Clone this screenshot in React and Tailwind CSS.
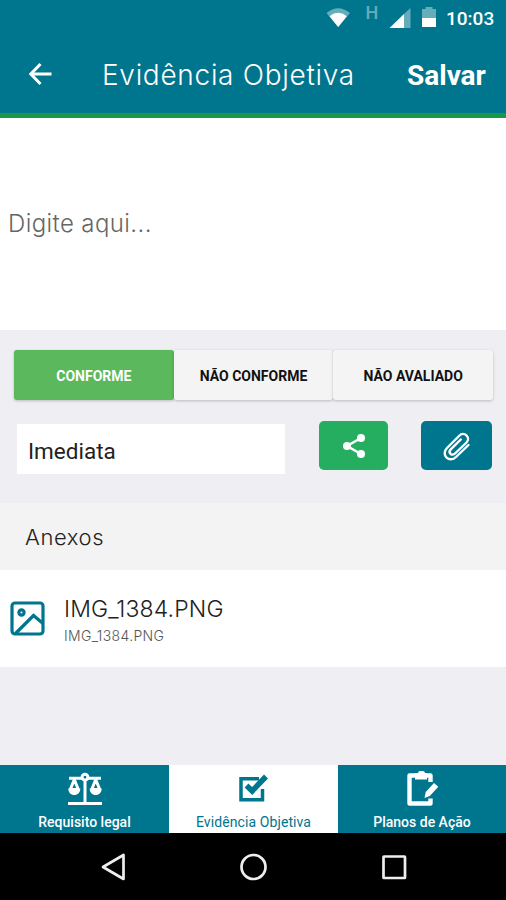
import { useState } from 'react'

const SITUACOES = [
  { id: 'conforme', label: 'CONFORME' },
  { id: 'nao-conforme', label: 'NÃO CONFORME' },
  { id: 'nao-avaliado', label: 'NÃO AVALIADO' },
]

const ABAS = [
  { id: 'requisito', label: 'Requisito legal', Icon: IconeBalanca },
  { id: 'evidencia', label: 'Evidência Objetiva', Icon: IconeCheck },
  { id: 'planos', label: 'Planos de Ação', Icon: IconePlano },
]

const ANEXOS = [{ nome: 'IMG_1384.PNG', arquivo: 'IMG_1384.PNG' }]

function IconeBalanca() {
  return (
    <svg width="36" height="34" viewBox="0 0 36 34" fill="none" stroke="currentColor" strokeWidth="3">
      <path d="M1 31.500h34M18 9v22M2 6.200h13M21 6.200h13" />
      <circle cx="18" cy="5.200" r="2.900" />
      <path strokeWidth="3" strokeLinejoin="round" d="M7.300 7.500 3.300 17.500h8ZM28.700 7.500 24.700 17.500h8Z" />
      <path fill="currentColor" stroke="none" d="M1.300 16.500h12c0 4-2.500 6.500-6 6.500s-6-2.500-6-6.500ZM22.700 16.500h12c0 4-2.500 6.500-6 6.500s-6-2.500-6-6.500Z" />
    </svg>
  )
}

function IconeCheck() {
  return (
    <svg width="36" height="34" viewBox="0 0 36 34" fill="none" stroke="currentColor">
      <path strokeWidth="3.500" d="M23 6.700H5v21h21.500V17" />
      <path strokeWidth="5.500" d="m10.500 13.500 5.700 5.500L30 4.500" />
    </svg>
  )
}

function IconePlano() {
  return (
    <svg width="36" height="38" viewBox="0 0 36 38" fill="none" stroke="currentColor">
      <path strokeWidth="4.400" strokeLinejoin="round" d="M26.500 12V5.500h-21v28h21v-5" />
      <path fill="currentColor" stroke="none" d="M11 3h3q.3-2 2-2h3q1.700 0 2 2h2v6.500H11ZM20.500 28l1.200-6L30 13l4.300 3.700-8.500 9.300Z" />
    </svg>
  )
}

function BarraStatus() {
  return (
    <div className="flex h-[37px] items-start justify-end pr-[11px] text-white">
      <svg width="110" height="37" viewBox="0 0 110 37" fill="currentColor">
        <path opacity=".4" d="M.5 13Q12 3.500 24 13L12.200 27Z" />
        <path d="M3.500 16.200Q12 9.500 20.800 16.200L12.200 27Z" />
        <path opacity=".4" d="M78 14v14h6.500V8Z" />
        <path d="M63.500 28 78 14V28Z" />
        <path opacity=".4" d="M96 9h3.500V7h7v2h3.500v9H96Z" />
        <path d="M96 18h14v9H96Z" />
        <text x="39.500" y="19" fontSize="18" opacity=".4" className="font-['Roboto',sans-serif] font-medium">H</text>
      </svg>
      <span className="ml-[10px] mt-[5px] w-[49px] whitespace-nowrap font-['Roboto',sans-serif] text-[19px] leading-[27px] font-medium">
        10:03
      </span>
    </div>
  )
}

export default function App() {
  const [situacao, setSituacao] = useState('conforme')
  const [aba, setAba] = useState('evidencia')

  return (
    <div className="flex h-[900px] w-[506px] flex-col overflow-hidden bg-[#eeeef3] font-['Inter',sans-serif]">
      {/* Cabeçalho */}
      <header className="h-[118px] shrink-0 border-b-[5px] border-[#159b48] bg-[#00758e] text-white">
        <BarraStatus />
        <div className="flex h-[76px] items-center">
          <button type="button" aria-label="Voltar" className="mb-[3px] ml-7">
            <svg width="24" height="24" viewBox="0 0 24 24" fill="none" stroke="currentColor" strokeWidth="3">
              <path d="M23.500 12H3M12.500 2 2.800 12l9.700 10" />
            </svg>
          </button>
          <h1 className="ml-[50px] w-[254px] whitespace-nowrap text-[28px] font-light tracking-[0.7px]">
            Evidência Objetiva
          </h1>
          <button type="button" className="ml-[51px] pt-px font-['Roboto',sans-serif] text-[28px] font-bold">
            Salvar
          </button>
        </div>
      </header>

      <div className="flex h-[212px] shrink-0 items-center bg-white px-2">
        <textarea
          rows={1}
          placeholder="Digite aqui..."
          className="w-full resize-none overflow-hidden text-[24px] leading-9 font-light tracking-[0.4px] outline-none placeholder:text-[#666]"
        />
      </div>

      <section className="h-[173px] shrink-0 px-[14px] pt-5">
        {/* Situação */}
        <div className="flex h-[50px] w-[479px]">
          {SITUACOES.map((s) => (
            <button
              key={s.id}
              type="button"
              onClick={() => setSituacao(s.id)}
              className={`flex-1 rounded-[3px] pt-0.5 font-['Roboto',sans-serif] text-[14px] font-bold shadow-[0_1px_3px_rgba(0,0,0,0.22)] ${
                situacao === s.id ? 'bg-[#5cb85c] text-white' : 'bg-[#f4f4f4] text-[#111]'
              }`}
            >
              {s.label}
            </button>
          ))}
        </div>

        <div className="mt-[21px] flex">
          <div className="ml-[3px] mt-[3px] flex h-[50px] w-[269px] items-center bg-white pl-[11px] pt-1.5 font-['Roboto',sans-serif] text-[22.5px] text-[#222]">
            Imediata
          </div>
          <button type="button" aria-label="Compartilhar" className="ml-[34px] flex h-[49px] w-[70px] items-center justify-center rounded-[5px] bg-[#25ae5f] text-white">
            <svg width="24" height="26" viewBox="0 0 24 26" fill="currentColor">
              <path fill="none" stroke="currentColor" strokeWidth="2.500" d="M19 5 5 13l14 8" />
              <circle cx="19" cy="5" r="4" />
              <circle cx="5" cy="13" r="4" />
              <circle cx="19" cy="21" r="4" />
            </svg>
          </button>
          <button type="button" aria-label="Anexar" className="ml-[33px] flex h-[49px] w-[71px] items-center justify-center rounded-[5px] bg-[#00758e] text-white">
            <svg width="28" height="30" viewBox="0 0 28 30" fill="none" stroke="currentColor" strokeWidth="2.400" strokeLinecap="round" strokeLinejoin="round">
              <path d="M25.500 14 13 26c-3 3-7 3-9.500.5S1 20 4 17L16.500 4.500c2-2 5-2 7 0s2 5 0 7L12 22.500c-1.500 1.500-3.300 1.500-4.500.3s-1.200-3 .3-4.500l10-9.800" />
            </svg>
          </button>
        </div>
      </section>

      {/* Anexos */}
      <h2 className="flex h-[67px] shrink-0 items-center bg-[#f3f3f3] pl-[25px] pt-0.5 text-[22px] font-light tracking-[0.6px] text-[#222]">
        Anexos
      </h2>
      <ul className="bg-white">
        {ANEXOS.map((a) => (
          <li key={a.nome} className="flex h-[97px] items-center pl-[10px]">
            <svg width="35" height="35" viewBox="0 0 35 35" fill="none" stroke="#00758e" strokeWidth="3.200">
              <rect x="2" y="2" width="31" height="31" rx="3" />
              <circle cx="11.500" cy="11.500" r="2.600" />
              <path d="M5.500 32.500 23.500 14.500l9.500 8" />
            </svg>
            <div className="ml-[19px] mt-[5px]">
              <p className="text-[23px] leading-[30px] font-light tracking-[0.15px] text-[#222]">{a.nome}</p>
              <p className="text-[14px] leading-6 font-light tracking-[0.35px] text-[#555]">{a.arquivo}</p>
            </div>
          </li>
        ))}
      </ul>

      {/* Abas */}
      <nav className="mt-auto grid h-[68px] shrink-0 grid-cols-[169px_169px_168px]">
        {ABAS.map(({ id, label, Icon }) => (
          <button
            key={id}
            type="button"
            onClick={() => setAba(id)}
            className={`flex flex-col items-center font-['Roboto',sans-serif] text-[14px] leading-5 ${
              aba === id ? 'bg-white tracking-[0.1px] text-[#00758e]' : 'bg-[#00758e] font-medium text-white'
            }`}
          >
            <span className="flex h-[47px] items-center">
              <Icon />
            </span>
            {label}
          </button>
        ))}
      </nav>

      <div className="flex h-[67px] shrink-0 items-center bg-black pl-[100px] text-[#eee]">
        <svg width="308" height="30" viewBox="0 0 308 30" fill="none" stroke="currentColor" strokeWidth="2.700">
          <path strokeLinejoin="round" d="M3 15 23.500 3v24Z" />
          <circle cx="153.500" cy="15" r="12" />
          <rect x="283.500" y="4.500" width="21.500" height="21.500" rx=".5" />
        </svg>
      </div>
    </div>
  )
}
